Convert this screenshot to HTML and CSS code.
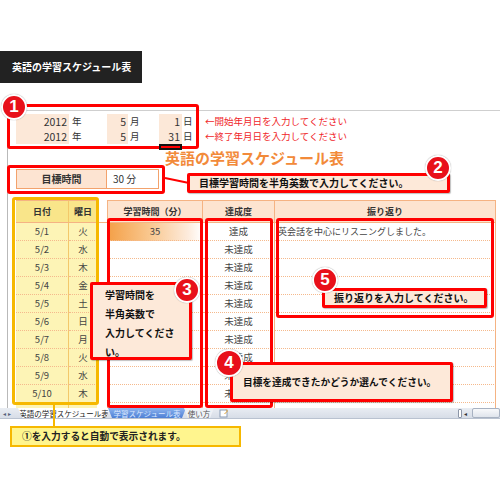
FILE: index.html
```html
<!DOCTYPE html>
<html lang="ja">
<head>
<meta charset="utf-8">
<title>英語の学習スケジュール表</title>
<link rel="stylesheet" href="styles.css">
</head>
<body>
<div class="page">
  <div class="doc-title">英語の学習スケジュール表</div>

  <div class="sheet">
    <div class="dates">
      <div class="date-row">
        <span class="in">2012</span><span class="u u-y">年</span>
        <span class="in">5</span><span class="u u-m">月</span>
        <span class="in">1</span><span class="u u-d">日</span>
        <span class="note">←開始年月日を入力してください</span>
      </div>
      <div class="date-row">
        <span class="in">2012</span><span class="u u-y">年</span>
        <span class="in">5</span><span class="u u-m">月</span>
        <span class="in">31</span><span class="u u-d">日</span>
        <span class="note">←終了年月日を入力してください</span>
      </div>
    </div>

    <div class="title">英語の学習スケジュール表</div>

    <div class="target">
      <div class="target-label">目標時間</div>
      <div class="target-value">30 分</div>
    </div>

    <div class="grid">
      <div class="row head">
        <div class="c dt">日付</div><div class="c dw">曜日</div><div class="c gp"></div>
        <div class="c mn">学習時間（分）</div><div class="c ac">達成度</div><div class="c rf">振り返り</div>
      </div>
      <div class="row">
        <div class="c dt">5/1</div><div class="c dw">火</div><div class="c gp"></div>
        <div class="c mn mn-fill">35</div><div class="c ac">達成</div><div class="c rf">英会話を中心にリスニングしました。</div>
      </div>
      <div class="row">
        <div class="c dt">5/2</div><div class="c dw">水</div><div class="c gp"></div>
        <div class="c mn"></div><div class="c ac">未達成</div><div class="c rf"></div>
      </div>
      <div class="row">
        <div class="c dt">5/3</div><div class="c dw">木</div><div class="c gp"></div>
        <div class="c mn"></div><div class="c ac">未達成</div><div class="c rf"></div>
      </div>
      <div class="row">
        <div class="c dt">5/4</div><div class="c dw">金</div><div class="c gp"></div>
        <div class="c mn"></div><div class="c ac">未達成</div><div class="c rf"></div>
      </div>
      <div class="row">
        <div class="c dt">5/5</div><div class="c dw">土</div><div class="c gp"></div>
        <div class="c mn"></div><div class="c ac">未達成</div><div class="c rf"></div>
      </div>
      <div class="row">
        <div class="c dt">5/6</div><div class="c dw">日</div><div class="c gp"></div>
        <div class="c mn"></div><div class="c ac">未達成</div><div class="c rf"></div>
      </div>
      <div class="row">
        <div class="c dt">5/7</div><div class="c dw">月</div><div class="c gp"></div>
        <div class="c mn"></div><div class="c ac">未達成</div><div class="c rf"></div>
      </div>
      <div class="row">
        <div class="c dt">5/8</div><div class="c dw">火</div><div class="c gp"></div>
        <div class="c mn"></div><div class="c ac">未達成</div><div class="c rf"></div>
      </div>
      <div class="row">
        <div class="c dt">5/9</div><div class="c dw">水</div><div class="c gp"></div>
        <div class="c mn"></div><div class="c ac">未達成</div><div class="c rf"></div>
      </div>
      <div class="row">
        <div class="c dt">5/10</div><div class="c dw">木</div><div class="c gp"></div>
        <div class="c mn"></div><div class="c ac">未達成</div><div class="c rf"></div>
      </div>
      <div class="row">
        <div class="c dt"></div><div class="c dw"></div><div class="c gp"></div>
        <div class="c mn"></div><div class="c ac"></div><div class="c rf"></div>
      </div>
    </div>
  </div>

  <div class="tabbar">
    <div class="tab-nav"><span>◂</span><span>▸</span></div>
    <div class="tab tab-a">英語の学習スケジュール表</div>
    <div class="tab tab-b">学習スケジュール表</div>
    <div class="tab tab-c">使い方</div>
    <div class="tab-new">
      <svg width="11" height="9" viewBox="0 0 11 9"><rect x="1" y="1" width="7" height="7" fill="#fff" stroke="#8a9bb5"/><path d="M7 0.5l1.5 1.5-3 3" stroke="#e0a030" fill="none"/></svg>
    </div>
    <div class="hscroll"><span class="split"></span><span class="arr">◂</span><span class="thumb"></span></div>
  </div>

  <!-- annotation overlays -->
  <div class="redbox box-dates"></div>
  <div class="selcell"></div>
  <div class="redbox box-target"></div>
  <svg class="link" width="30" height="12" viewBox="0 0 30 12"><line x1="1" y1="3" x2="25" y2="8" stroke="#f00" stroke-width="2"/></svg>
  <div class="callout co-2">目標学習時間を半角英数で入力してください。</div>

  <div class="yellowbox"></div>
  <div class="yellowline"></div>
  <div class="ycallout">①を入力すると自動で表示されます。</div>

  <div class="redbox box-min"></div>
  <div class="redbox box-ach"></div>
  <div class="redbox box-ref"></div>

  <div class="callout co-3">学習時間を<br>半角英数で<br>入力してくださ<br>い。</div>
  <div class="callout co-5">振り返りを入力してください。</div>
  <div class="callout co-4">目標を達成できたかどうか選んでください。</div>

  <div class="badge b1">1</div>
  <div class="badge b2">2</div>
  <div class="badge b3">3</div>
  <div class="badge b4">4</div>
  <div class="badge b5">5</div>
</div>
</body>
</html>
```

FILE: styles.css
```css
* { box-sizing: border-box; }
html, body { margin: 0; padding: 0; background: #fff; }
body {
  font-family: "Noto Sans CJK JP", "Noto Sans", sans-serif;
  color: #333;
}
.page {
  position: relative;
  width: 500px;
  height: 500px;
  overflow: hidden;
}

/* dark document label */
.doc-title {
  margin-top: 51px;
  width: 142px;
  height: 32px;
  background: #222;
  color: #fff;
  font-weight: bold;
  font-size: 10px;
  line-height: 32px;
  padding-left: 12px;
}

/* spreadsheet */
.sheet {
  margin-top: 27px;
  margin-left: 7px;
  height: 298px;
  border-top: 1px solid #cfcfcf;
  border-left: 1px solid #b9b9b9;
  overflow: hidden;
}
.dates {
  margin-top: 3px;
  padding-left: 8px;
}
.date-row {
  display: grid;
  grid-template-columns: 53px 38px 21px 31px 23px 17px auto;
  height: 15px;
  line-height: 15px;
  font-size: 10.5px;
  color: #333;
}
.in {
  background: #fce8d8;
  text-align: right;
  padding-right: 2px;
}
.u { font-size: 9.5px; }
.u-y { padding-left: 3px; }
.u-m { padding-left: 2px; }
.u-d { padding-left: 1px; }
.note {
  padding-left: 6px;
  font-size: 9.5px;
  color: #f0262a;
  white-space: nowrap;
}

.title {
  margin: 6px 0 0 157px;
  height: 16px;
  line-height: 16px;
  font-size: 15px;
  font-weight: bold;
  color: #f28a3a;
  white-space: nowrap;
}

.target {
  margin: 3px 0 0 8px;
  display: flex;
  width: 143px;
  height: 20px;
  border: 1px solid #f3a26c;
  font-size: 10px;
  line-height: 18px;
}
.target-label {
  width: 90px;
  background: #fde4d2;
  font-weight: bold;
  text-align: center;
  border-right: 1px solid #f3a26c;
}
.target-value {
  padding-left: 6px;
  color: #333;
}

.grid {
  margin: 11px 0 0 8px;
  width: 480px;
}
.row {
  display: grid;
  grid-template-columns: 53px 28px 10px 96px 72px 221px;
  height: 18px;
  font-size: 9.5px;
  line-height: 17px;
  color: #444;
}
.row .c {
  border-bottom: 1px dotted #f5b98c;
  text-align: center;
  white-space: nowrap;
  overflow: hidden;
}
.row .dt { background: #fdf4b6; border-right: 1px solid #f3c86a; }
.row .dw { background: #fdf4b6; }
.row .gp { background: #fff; border-bottom-color: transparent; }
.row .mn { border-left: 1px solid #f5b383; border-right: 1px solid #f5b383; }
.row .ac { border-right: 1px solid #f5b383; }
.row .rf { border-right: 1px solid #f5b383; text-align: left; padding-left: 3px; font-size: 9px; }
.mn-fill { background: linear-gradient(to right, #f4a048, #f9c890 45%, #fdebdc 85%, #fff); }

.row.head {
  height: 23px;
  line-height: 22px;
  font-size: 9px;
  font-weight: bold;
  color: #333;
}
.row.head .c {
  border-top: 1px solid #f5b383;
  border-bottom: 1px solid #f5b383;
}
.row.head .dt, .row.head .dw { background: #f9e58a; }
.row.head .gp { background: #fff; border-top-color: transparent; border-bottom-color: #f5b383; }
.row.head .mn, .row.head .ac, .row.head .rf { background: #fde4d0; text-align: center; padding-left: 0; font-size: 9px; }

/* sheet tab bar */
.tabbar {
  display: flex;
  align-items: stretch;
  height: 11px;
  background: linear-gradient(#e9edf3, #d7dde7);
  border-bottom: 1px solid #b9c2d0;
  font-size: 7.5px;
  line-height: 11px;
}
.tab-nav {
  width: 18px;
  display: flex;
  gap: 2px;
  padding-left: 3px;
  color: #56627a;
  font-size: 6px;
}
.tab {
  white-space: nowrap;
  text-align: center;
  clip-path: polygon(0 0, 100% 0, calc(100% - 4px) 100%, 4px 100%);
}
.tab-a { width: 92px; background: #fff; color: #222; }
.tab-b { width: 78px; margin-left: -2px; background: linear-gradient(#8db3ee, #4d7fd5); color: #dce9ff; }
.tab-c { width: 30px; margin-left: -2px; background: #eef1f6; color: #555; }
.tab-new { width: 16px; padding: 1px 0 0 5px; }
.hscroll {
  margin-left: auto;
  display: flex;
  align-items: center;
  gap: 2px;
}
.split { width: 4px; height: 9px; border: 1px solid #8c96a8; border-radius: 1px; background: #fff; }
.arr { font-size: 6px; color: #333; width: 6px; }
.thumb { width: 28px; height: 10px; border: 1px solid #a8b2c2; border-radius: 2px; background: linear-gradient(#f8f9fb, #dfe4ec); }

/* overlays */
.redbox {
  position: absolute;
  border: 3px solid #f00;
  border-radius: 3px;
}
.box-dates { left: 7px; top: 104px; width: 192px; height: 45px; }
.box-target { left: 7px; top: 165px; width: 158px; height: 29px; }
.box-min { left: 107px; top: 218px; width: 96px; height: 190px; }
.box-ach { left: 205px; top: 218px; width: 68px; height: 190px; }
.box-ref { left: 276px; top: 218px; width: 218px; height: 100px; }

.selcell {
  position: absolute;
  left: 159px; top: 144px;
  width: 23px; height: 6px;
  border: 2px solid #111;
}
.link { position: absolute; left: 164px; top: 175px; }

.callout {
  position: absolute;
  background: #fde9d9;
  border: 3px solid #f00;
  border-radius: 2px;
  box-shadow: 1px 1px 1px rgba(0,0,0,.25);
  font-size: 10px;
  font-weight: bold;
  color: #111;
  white-space: nowrap;
}
.co-2 { left: 187px; top: 173px; width: 263px; height: 20px; line-height: 14px; padding-left: 9px; }
.co-3 { left: 90px; top: 282px; width: 102px; height: 78px; line-height: 19px; padding: 0 0 0 12px; }
.co-4 { left: 230px; top: 362px; width: 223px; height: 40px; line-height: 34px; padding-left: 10px; font-size: 9.7px; }
.co-5 { left: 322px; top: 288px; width: 165px; height: 20px; line-height: 14px; padding-left: 9px; }

.yellowbox {
  position: absolute;
  left: 12px; top: 197px;
  width: 87px; height: 208px;
  border: 3px solid #f6b800;
  border-radius: 3px;
}
.yellowline {
  position: absolute;
  left: 53px; top: 405px;
  width: 2px; height: 22px;
  background: #f6b800;
}
.ycallout {
  position: absolute;
  left: 10px; top: 426px;
  width: 231px; height: 21px;
  background: #fff58e;
  border: 2px solid #f6b800;
  font-size: 9.7px;
  font-weight: bold;
  color: #222;
  line-height: 17px;
  padding-left: 10px;
  white-space: nowrap;
}

.badge {
  position: absolute;
  width: 26px; height: 26px;
  border-radius: 50%;
  background: #e8101a;
  border: 2px solid #fff;
  box-shadow: 0 0 1px 0 rgba(0,0,0,.45);
  color: #fff;
  font-family: "Liberation Sans", Arial, sans-serif;
  font-weight: bold;
  font-size: 17px;
  line-height: 22px;
  text-align: center;
}
.b1 { left: 1px; top: 94px; }
.b2 { left: 425px; top: 155px; }
.b3 { left: 174px; top: 277px; }
.b4 { left: 215px; top: 349px; width: 28px; height: 28px; line-height: 24px; }
.b5 { left: 312px; top: 267px; }
```
